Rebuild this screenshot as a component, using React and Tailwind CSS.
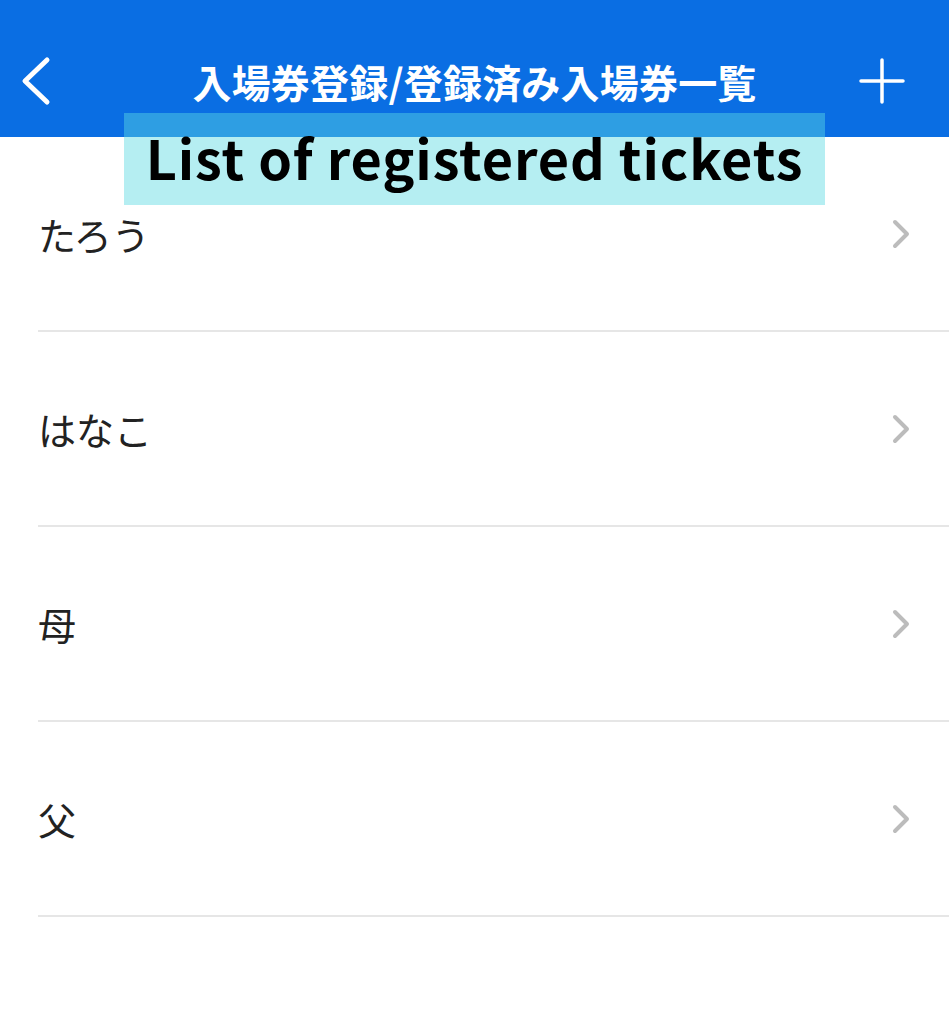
const rows = ['たろう', 'はなこ', '母', '父'];

const jp = { fontFamily: '"Noto Sans CJK JP", "Noto Sans", sans-serif' };

const Chevron = () => (
  <svg width="20" height="32" viewBox="0 0 20 32" fill="none">
    <path d="M4 4 L16 16 L4 28" stroke="#bcbcbc" strokeWidth="4" strokeLinecap="round" strokeLinejoin="round" />
  </svg>
);

export default function App() {
  return (
    <div className="relative min-h-[1024px] w-full bg-white" style={jp}>
      <header className="flex h-[137px] items-end bg-[#0a6ee3] pb-[27px]">
        <div className="grid w-full grid-cols-[1fr_auto_1fr] items-center pl-[18px] pr-[44px]">
          <svg width="36" height="50" viewBox="0 0 36 50" fill="none">
            <path d="M29 4 L7 25 L29 46" stroke="#fff" strokeWidth="5" strokeLinecap="round" strokeLinejoin="round" />
          </svg>
          <h1 className="ml-[26px] text-[39px] font-bold tracking-[0.2px] text-white">入場券登録/登録済み入場券一覧</h1>
          <svg className="justify-self-end" width="46" height="46" viewBox="0 0 46 46" fill="none">
            <path d="M23 2 V44 M2 23 H44" stroke="#fff" strokeWidth="3.5" strokeLinecap="round" />
          </svg>
        </div>
      </header>

      <div className="absolute left-[124px] top-[113px] flex h-[92px] w-[701px] items-center justify-center bg-[rgba(91,217,226,0.45)]">
        <span className="-mt-[4px] text-[54px] font-bold leading-none tracking-[0.9px] text-black" style={{ fontFamily: '"Noto Sans CJK JP", sans-serif' }}>List of registered tickets</span>
      </div>

      <ul>
        {rows.map((name) => (
          <li key={name} className="ml-[38px] flex h-[195px] items-center justify-between border-b-2 border-[#e6e6e6] pr-[38px]">
            <span className="text-[38px] font-normal text-[#222]">{name}</span>
            <Chevron />
          </li>
        ))}
      </ul>
    </div>
  );
}
